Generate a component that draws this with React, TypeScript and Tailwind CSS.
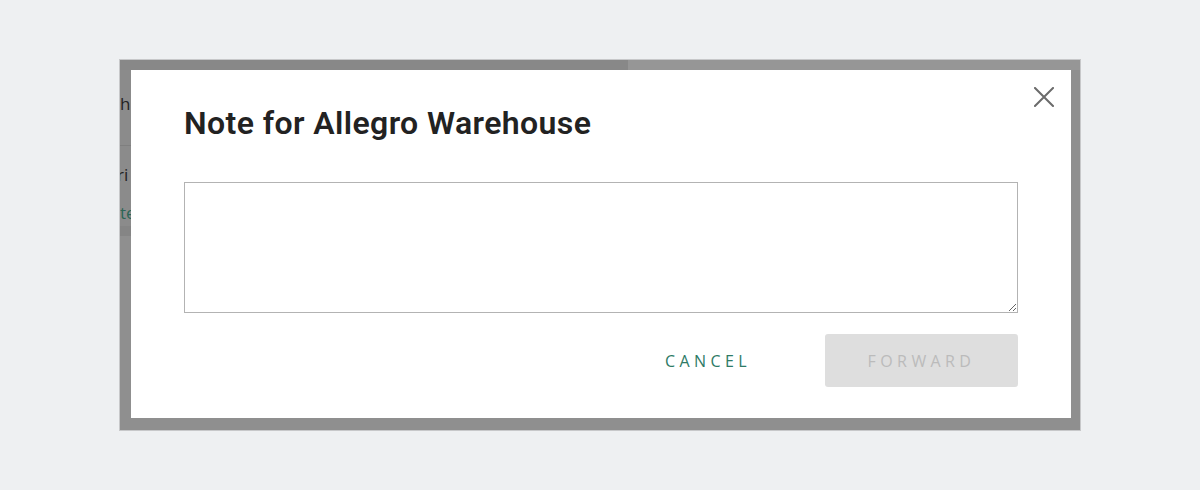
import React from 'react';

// Underlying page peeks through the overlay on the left edge
function BackdropStrip() {
  return (
    <div className="w-[11px] shrink-0 overflow-hidden flex flex-col font-['Open_Sans',sans-serif]">
      <div className="h-[156px] bg-[#8b8b8b] flex flex-col">
        <div className="h-[22px]" />
        <div className="h-[24px] text-[17px] leading-[24px] text-[#232323] whitespace-nowrap">h</div>
        <div className="h-[29px]" />
        <div className="h-[1px] bg-[#7f7f7f]" />
        <div className="h-[17px]" />
        <div className="h-[24px] text-[17px] leading-[24px] text-[#232323] whitespace-nowrap -ml-[3px]">ri</div>
        <div className="h-[14px]" />
        <div className="h-[24px] text-[17px] leading-[24px] text-[#2c6656] whitespace-nowrap">te</div>
      </div>
      <div className="h-[10px] bg-[#858585]" />
      <div className="flex-1 bg-[#8f8f8f]" />
    </div>
  );
}

function CloseIcon() {
  return (
    <svg width="20" height="20" viewBox="0 0 20 20" fill="none">
      <path d="M1 1L19 19M19 1L1 19" stroke="#6b6b6b" strokeWidth="2" strokeLinecap="square" />
    </svg>
  );
}

export default function App() {
  return (
    <div className="w-[1200px] h-[490px] bg-[#eef0f2] pt-[59px] pl-[119px]">
      <div className="w-[962px] h-[372px] border border-[#c7c8ca] bg-[#8f8f8f] flex flex-col">
        <div className="flex h-[10px] shrink-0">
          <div className="w-[508px] bg-[#888888]" />
          <div className="flex-1 bg-[#969696]" />
        </div>
        <div className="flex">
          <BackdropStrip />
          <div className="relative w-[940px] h-[348px] bg-white pt-[33px] px-[53px] pb-[31px] flex flex-col">
            <button className="absolute right-[17px] top-[17px]" aria-label="Close">
              <CloseIcon />
            </button>
            <h2 className="text-[32px] leading-[40px] font-semibold tracking-[0.4px] text-[#222222] font-['Roboto',sans-serif]">
              Note for Allegro Warehouse
            </h2>
            <textarea className="mt-[39px] w-full h-[132px] border border-[#b3b3b3] outline-none p-2 text-[15px] font-['Open_Sans',sans-serif]" />
            <div className="mt-[21px] flex justify-end items-center font-['Open_Sans',sans-serif]">
              <button className="h-[53px] px-[16px] mr-[58px] text-[16px] tracking-[4.4px] text-[#2e7a66]">
                CANCEL
              </button>
              <button
                disabled
                className="w-[193px] h-[53px] rounded-[3px] bg-[#dedede] text-[16px] tracking-[4.4px] text-[#bbbbbb]"
              >
                FORWARD
              </button>
            </div>
          </div>
        </div>
      </div>
    </div>
  );
}
